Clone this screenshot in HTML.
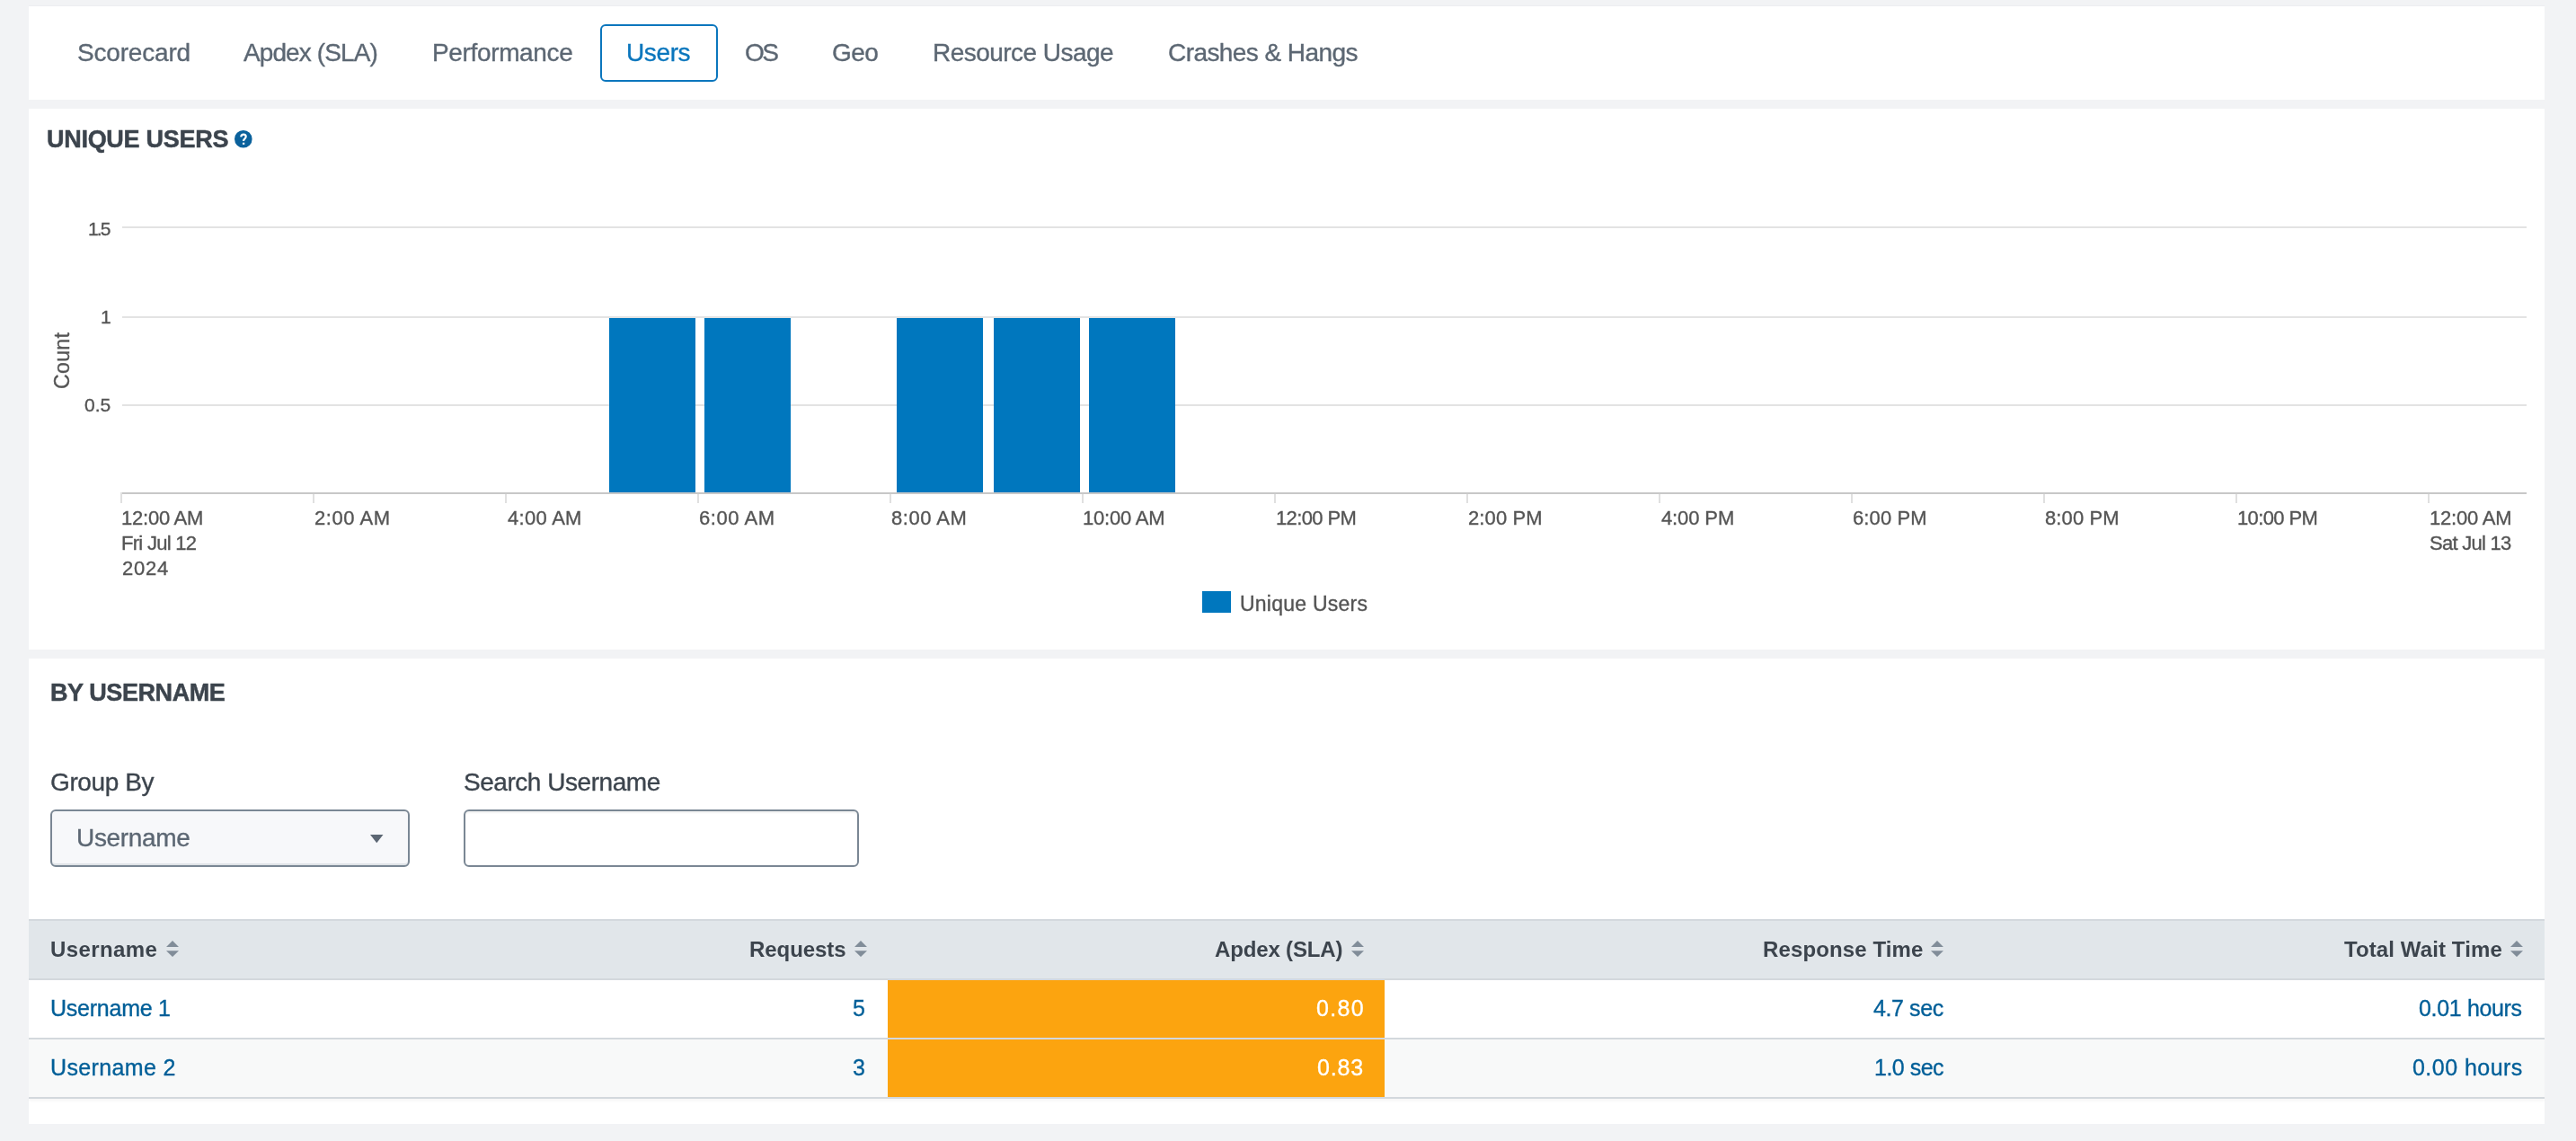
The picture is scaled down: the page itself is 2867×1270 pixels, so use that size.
<!DOCTYPE html><html><head><meta charset='utf-8'><style>
html,body{margin:0;padding:0;}
body{width:2867px;height:1270px;background:#f2f3f5;position:relative;overflow:hidden;font-family:"Liberation Sans", sans-serif;}
.p{position:absolute;background:#fff;}
.t{position:absolute;white-space:nowrap;will-change:transform;}
.a{position:absolute;}
</style></head><body>
<div class='p' style='left:32px;top:7px;width:2800px;height:104px;box-shadow:0 -1px 0 #eceef1'></div>
<div class='p' style='left:32px;top:121px;width:2800px;height:602px'></div>
<div class='p' style='left:32px;top:733px;width:2800px;height:518px'></div>
<div class='a' style='left:668px;top:27px;width:127px;height:60px;border:2px solid #0b76bd;border-radius:6px'></div>
<svg class='a' style='left:260.3px;top:143.7px;overflow:visible' width='22' height='22' viewBox='0 0 22 22'>
<circle cx='10.8' cy='10.8' r='9.8' fill='#0a619c'/>
<path d='M8.2 8.4 C8.4 6.3 9.5 5.6 11.0 5.6 C12.7 5.6 13.7 6.6 13.7 8.0 C13.7 9.2 12.9 9.9 12.2 10.6 C11.4 11.3 11.0 11.9 11.0 12.9' fill='none' stroke='#fff' stroke-width='2.2'/>
<rect x='9.95' y='14.75' width='2.3' height='2.1' fill='#fff'/>
</svg>
<div class='a' style='left:136px;top:252.2px;width:2676px;height:1.8px;background:#e3e3e3'></div>
<div class='a' style='left:136px;top:352.0px;width:2676px;height:1.8px;background:#e3e3e3'></div>
<div class='a' style='left:136px;top:450.0px;width:2676px;height:1.8px;background:#e3e3e3'></div>
<div class='a' style='left:678px;top:354px;width:96px;height:194px;background:#0077be'></div>
<div class='a' style='left:784px;top:354px;width:96px;height:194px;background:#0077be'></div>
<div class='a' style='left:998px;top:354px;width:96px;height:194px;background:#0077be'></div>
<div class='a' style='left:1106px;top:354px;width:96px;height:194px;background:#0077be'></div>
<div class='a' style='left:1212px;top:354px;width:96px;height:194px;background:#0077be'></div>
<div class='a' style='left:136px;top:548px;width:2676px;height:2px;background:#c8c8c8'></div>
<div class='a' style='left:134px;top:548px;width:2px;height:12px;background:#e0e0e0'></div>
<div class='a' style='left:348px;top:550px;width:2px;height:10px;background:#e0e0e0'></div>
<div class='a' style='left:562px;top:550px;width:2px;height:10px;background:#e0e0e0'></div>
<div class='a' style='left:776px;top:550px;width:2px;height:10px;background:#e0e0e0'></div>
<div class='a' style='left:990px;top:550px;width:2px;height:10px;background:#e0e0e0'></div>
<div class='a' style='left:1204px;top:550px;width:2px;height:10px;background:#e0e0e0'></div>
<div class='a' style='left:1418px;top:550px;width:2px;height:10px;background:#e0e0e0'></div>
<div class='a' style='left:1632px;top:550px;width:2px;height:10px;background:#e0e0e0'></div>
<div class='a' style='left:1846px;top:550px;width:2px;height:10px;background:#e0e0e0'></div>
<div class='a' style='left:2060px;top:550px;width:2px;height:10px;background:#e0e0e0'></div>
<div class='a' style='left:2274px;top:550px;width:2px;height:10px;background:#e0e0e0'></div>
<div class='a' style='left:2488px;top:550px;width:2px;height:10px;background:#e0e0e0'></div>
<div class='a' style='left:2702px;top:550px;width:2px;height:10px;background:#e0e0e0'></div>
<div class='a' style='left:1338px;top:658px;width:32px;height:24px;background:#0077be'></div>
<div class='a' style='left:56px;top:901px;width:396px;height:60px;border:2px solid #7a8794;border-radius:6px;background:#f7f8fa;box-shadow:inset 0 -2px 0 #dfe3e7'></div>
<svg class='a' style='left:411.5px;top:928.5px' width='15' height='10' viewBox='0 0 15 10'><path d='M0 0 L14.5 0 L7.25 9.3 Z' fill='#5c6773'/></svg>
<div class='a' style='left:516px;top:901px;width:436px;height:60px;border:2px solid #7a8794;border-radius:6px;background:#fff;box-shadow:inset 0 2px 2px rgba(0,0,0,0.05)'></div>
<div class='a' style='left:32px;top:1023px;width:2800px;height:2px;background:#d3d8dd'></div>
<div class='a' style='left:32px;top:1025px;width:2800px;height:64px;background:#e1e6ea'></div>
<div class='a' style='left:32px;top:1089px;width:2800px;height:2px;background:#d3d8dd'></div>
<div class='a' style='left:32px;top:1155px;width:2800px;height:2px;background:#d3d8dd'></div>
<div class='a' style='left:32px;top:1157px;width:2800px;height:64px;background:#f8f9f9'></div>
<div class='a' style='left:32px;top:1221px;width:2800px;height:2px;background:#d3d8dd;box-shadow:0 2px 3px rgba(0,0,0,0.06)'></div>
<div class='a' style='left:988px;top:1091px;width:553px;height:64px;background:#fca40f'></div>
<div class='a' style='left:988px;top:1157px;width:553px;height:64px;background:#fca40f'></div>
<svg class='a' style='left:185.3px;top:1046.9px' width='14' height='19' viewBox='0 0 14 19'><path d='M7 0 L14 7.0 L0 7.0 Z M0 11.2 L14 11.2 L7 18.1 Z' fill='#818d99'/></svg>
<svg class='a' style='left:951.0px;top:1046.9px' width='14' height='19' viewBox='0 0 14 19'><path d='M7 0 L14 7.0 L0 7.0 Z M0 11.2 L14 11.2 L7 18.1 Z' fill='#818d99'/></svg>
<svg class='a' style='left:1503.6px;top:1046.9px' width='14' height='19' viewBox='0 0 14 19'><path d='M7 0 L14 7.0 L0 7.0 Z M0 11.2 L14 11.2 L7 18.1 Z' fill='#818d99'/></svg>
<svg class='a' style='left:2149.4px;top:1046.9px' width='14' height='19' viewBox='0 0 14 19'><path d='M7 0 L14 7.0 L0 7.0 Z M0 11.2 L14 11.2 L7 18.1 Z' fill='#818d99'/></svg>
<svg class='a' style='left:2794.2px;top:1046.9px' width='14' height='19' viewBox='0 0 14 19'><path d='M7 0 L14 7.0 L0 7.0 Z M0 11.2 L14 11.2 L7 18.1 Z' fill='#818d99'/></svg>
<div class='t' style='left:85.80px;top:45.20px;font-size:28px;line-height:28px;font-weight:400;color:#5c6773;letter-spacing:-0.187px;-webkit-text-stroke:0.35px #5c6773;'>Scorecard</div>
<div class='t' style='left:271.00px;top:45.20px;font-size:28px;line-height:28px;font-weight:400;color:#5c6773;letter-spacing:-0.900px;-webkit-text-stroke:0.35px #5c6773;'>Apdex (SLA)</div>
<div class='t' style='left:480.50px;top:45.20px;font-size:28px;line-height:28px;font-weight:400;color:#5c6773;letter-spacing:-0.350px;-webkit-text-stroke:0.35px #5c6773;'>Performance</div>
<div class='t' style='left:697.00px;top:45.20px;font-size:28px;line-height:28px;font-weight:400;color:#0b76bd;letter-spacing:-0.375px;-webkit-text-stroke:0.35px #0b76bd;'>Users</div>
<div class='t' style='left:828.50px;top:45.20px;font-size:28px;line-height:28px;font-weight:400;color:#5c6773;letter-spacing:-2.500px;-webkit-text-stroke:0.35px #5c6773;'>OS</div>
<div class='t' style='left:926.00px;top:45.20px;font-size:28px;line-height:28px;font-weight:400;color:#5c6773;letter-spacing:-0.500px;-webkit-text-stroke:0.35px #5c6773;'>Geo</div>
<div class='t' style='left:1038.00px;top:45.20px;font-size:28px;line-height:28px;font-weight:400;color:#5c6773;letter-spacing:-0.538px;-webkit-text-stroke:0.35px #5c6773;'>Resource Usage</div>
<div class='t' style='left:1300.00px;top:45.20px;font-size:28px;line-height:28px;font-weight:400;color:#5c6773;letter-spacing:-0.571px;-webkit-text-stroke:0.35px #5c6773;'>Crashes &amp; Hangs</div>
<div class='t' style='left:52.00px;top:142.00px;font-size:27px;line-height:27px;font-weight:700;color:#3c444d;letter-spacing:-0.282px;-webkit-text-stroke:0.5px #3c444d;'>UNIQUE USERS</div>
<div class='t' style='left:56.00px;top:758.10px;font-size:27px;line-height:27px;font-weight:700;color:#3c444d;letter-spacing:-0.420px;-webkit-text-stroke:0.5px #3c444d;'>BY USERNAME</div>
<div class='t' style='left:97.80px;top:243.80px;font-size:21px;line-height:21px;font-weight:400;color:#545454;letter-spacing:-1.900px;-webkit-text-stroke:0.35px #545454;'>1.5</div>
<div class='t' style='left:112.00px;top:341.80px;font-size:21px;line-height:21px;font-weight:400;color:#545454;letter-spacing:0.000px;-webkit-text-stroke:0.35px #545454;'>1</div>
<div class='t' style='left:94.00px;top:439.60px;font-size:21px;line-height:21px;font-weight:400;color:#545454;letter-spacing:0.000px;-webkit-text-stroke:0.35px #545454;'>0.5</div>
<div class='t' style='left:135.10px;top:566.30px;font-size:22px;line-height:22px;font-weight:400;color:#545454;letter-spacing:-0.229px;-webkit-text-stroke:0.35px #545454;'>12:00 AM</div>
<div class='t' style='left:349.50px;top:566.30px;font-size:22px;line-height:22px;font-weight:400;color:#545454;letter-spacing:0.550px;-webkit-text-stroke:0.35px #545454;'>2:00 AM</div>
<div class='t' style='left:564.70px;top:566.30px;font-size:22px;line-height:22px;font-weight:400;color:#545454;letter-spacing:0.283px;-webkit-text-stroke:0.35px #545454;'>4:00 AM</div>
<div class='t' style='left:777.60px;top:566.30px;font-size:22px;line-height:22px;font-weight:400;color:#545454;letter-spacing:0.550px;-webkit-text-stroke:0.35px #545454;'>6:00 AM</div>
<div class='t' style='left:991.90px;top:566.30px;font-size:22px;line-height:22px;font-weight:400;color:#545454;letter-spacing:0.517px;-webkit-text-stroke:0.35px #545454;'>8:00 AM</div>
<div class='t' style='left:1205.40px;top:566.30px;font-size:22px;line-height:22px;font-weight:400;color:#545454;letter-spacing:-0.186px;-webkit-text-stroke:0.35px #545454;'>10:00 AM</div>
<div class='t' style='left:1419.60px;top:566.30px;font-size:22px;line-height:22px;font-weight:400;color:#545454;letter-spacing:-0.614px;-webkit-text-stroke:0.35px #545454;'>12:00 PM</div>
<div class='t' style='left:1634.10px;top:566.30px;font-size:22px;line-height:22px;font-weight:400;color:#545454;letter-spacing:0.117px;-webkit-text-stroke:0.35px #545454;'>2:00 PM</div>
<div class='t' style='left:1848.90px;top:566.30px;font-size:22px;line-height:22px;font-weight:400;color:#545454;letter-spacing:-0.117px;-webkit-text-stroke:0.35px #545454;'>4:00 PM</div>
<div class='t' style='left:2062.40px;top:566.30px;font-size:22px;line-height:22px;font-weight:400;color:#545454;letter-spacing:0.117px;-webkit-text-stroke:0.35px #545454;'>6:00 PM</div>
<div class='t' style='left:2276.20px;top:566.30px;font-size:22px;line-height:22px;font-weight:400;color:#545454;letter-spacing:0.100px;-webkit-text-stroke:0.35px #545454;'>8:00 PM</div>
<div class='t' style='left:2490.20px;top:566.30px;font-size:22px;line-height:22px;font-weight:400;color:#545454;letter-spacing:-0.614px;-webkit-text-stroke:0.35px #545454;'>10:00 PM</div>
<div class='t' style='left:2704.00px;top:566.30px;font-size:22px;line-height:22px;font-weight:400;color:#545454;letter-spacing:-0.214px;-webkit-text-stroke:0.35px #545454;'>12:00 AM</div>
<div class='t' style='left:135.10px;top:594.20px;font-size:22px;line-height:22px;font-weight:400;color:#545454;letter-spacing:-0.711px;-webkit-text-stroke:0.35px #545454;'>Fri Jul 12</div>
<div class='t' style='left:135.70px;top:622.20px;font-size:22px;line-height:22px;font-weight:400;color:#545454;letter-spacing:0.767px;-webkit-text-stroke:0.35px #545454;'>2024</div>
<div class='t' style='left:2704.00px;top:594.20px;font-size:22px;line-height:22px;font-weight:400;color:#545454;letter-spacing:-0.722px;-webkit-text-stroke:0.35px #545454;'>Sat Jul 13</div>
<div class='t' style='left:58.00px;top:432.60px;font-size:23px;line-height:23px;font-weight:400;color:#545454;letter-spacing:0.375px;-webkit-text-stroke:0.35px #545454;transform-origin:0 0;transform:rotate(-90deg)'>Count</div>
<div class='t' style='left:1380.30px;top:661.30px;font-size:23px;line-height:23px;font-weight:400;color:#545454;letter-spacing:0.236px;-webkit-text-stroke:0.35px #545454;'>Unique Users</div>
<div class='t' style='left:56.00px;top:857.20px;font-size:28px;line-height:28px;font-weight:400;color:#3c444d;letter-spacing:-0.386px;-webkit-text-stroke:0.35px #3c444d;'>Group By</div>
<div class='t' style='left:515.80px;top:857.20px;font-size:28px;line-height:28px;font-weight:400;color:#3c444d;letter-spacing:-0.457px;-webkit-text-stroke:0.35px #3c444d;'>Search Username</div>
<div class='t' style='left:85.30px;top:919.10px;font-size:28px;line-height:28px;font-weight:400;color:#5c6773;letter-spacing:-0.329px;-webkit-text-stroke:0.35px #5c6773;'>Username</div>
<div class='t' style='left:55.80px;top:1044.60px;font-size:24px;line-height:24px;font-weight:700;color:#3c444d;letter-spacing:0.414px;'>Username</div>
<div class='t' style='left:833.70px;top:1044.60px;font-size:24px;line-height:24px;font-weight:700;color:#3c444d;letter-spacing:-0.071px;'>Requests</div>
<div class='t' style='left:1352.30px;top:1044.60px;font-size:24px;line-height:24px;font-weight:700;color:#3c444d;letter-spacing:-0.150px;'>Apdex (SLA)</div>
<div class='t' style='left:1962.20px;top:1044.60px;font-size:24px;line-height:24px;font-weight:700;color:#3c444d;letter-spacing:0.117px;'>Response Time</div>
<div class='t' style='left:2608.50px;top:1044.60px;font-size:24px;line-height:24px;font-weight:700;color:#3c444d;letter-spacing:0.107px;'>Total Wait Time</div>
<div class='t' style='left:55.80px;top:1110.00px;font-size:25px;line-height:25px;font-weight:400;color:#005f98;letter-spacing:-0.244px;-webkit-text-stroke:0.35px #005f98;'>Username 1</div>
<div class='t' style='left:948.60px;top:1110.00px;font-size:25px;line-height:25px;font-weight:400;color:#005f98;letter-spacing:0.000px;-webkit-text-stroke:0.35px #005f98;'>5</div>
<div class='t' style='left:1464.60px;top:1110.00px;font-size:25px;line-height:25px;font-weight:400;color:#ffffff;letter-spacing:1.333px;-webkit-text-stroke:0.35px #ffffff;'>0.80</div>
<div class='t' style='left:2085.20px;top:1110.00px;font-size:25px;line-height:25px;font-weight:400;color:#005f98;letter-spacing:-0.400px;-webkit-text-stroke:0.35px #005f98;'>4.7 sec</div>
<div class='t' style='left:2691.90px;top:1110.00px;font-size:25px;line-height:25px;font-weight:400;color:#005f98;letter-spacing:-0.344px;-webkit-text-stroke:0.35px #005f98;'>0.01 hours</div>
<div class='t' style='left:55.80px;top:1176.00px;font-size:25px;line-height:25px;font-weight:400;color:#005f98;letter-spacing:0.367px;-webkit-text-stroke:0.35px #005f98;'>Username 2</div>
<div class='t' style='left:949.20px;top:1176.00px;font-size:25px;line-height:25px;font-weight:400;color:#005f98;letter-spacing:0.000px;-webkit-text-stroke:0.35px #005f98;'>3</div>
<div class='t' style='left:1466.20px;top:1176.00px;font-size:25px;line-height:25px;font-weight:400;color:#ffffff;letter-spacing:0.800px;-webkit-text-stroke:0.35px #ffffff;'>0.83</div>
<div class='t' style='left:2085.80px;top:1176.00px;font-size:25px;line-height:25px;font-weight:400;color:#005f98;letter-spacing:-0.500px;-webkit-text-stroke:0.35px #005f98;'>1.0 sec</div>
<div class='t' style='left:2684.60px;top:1176.00px;font-size:25px;line-height:25px;font-weight:400;color:#005f98;letter-spacing:0.467px;-webkit-text-stroke:0.35px #005f98;'>0.00 hours</div>
</body></html>
